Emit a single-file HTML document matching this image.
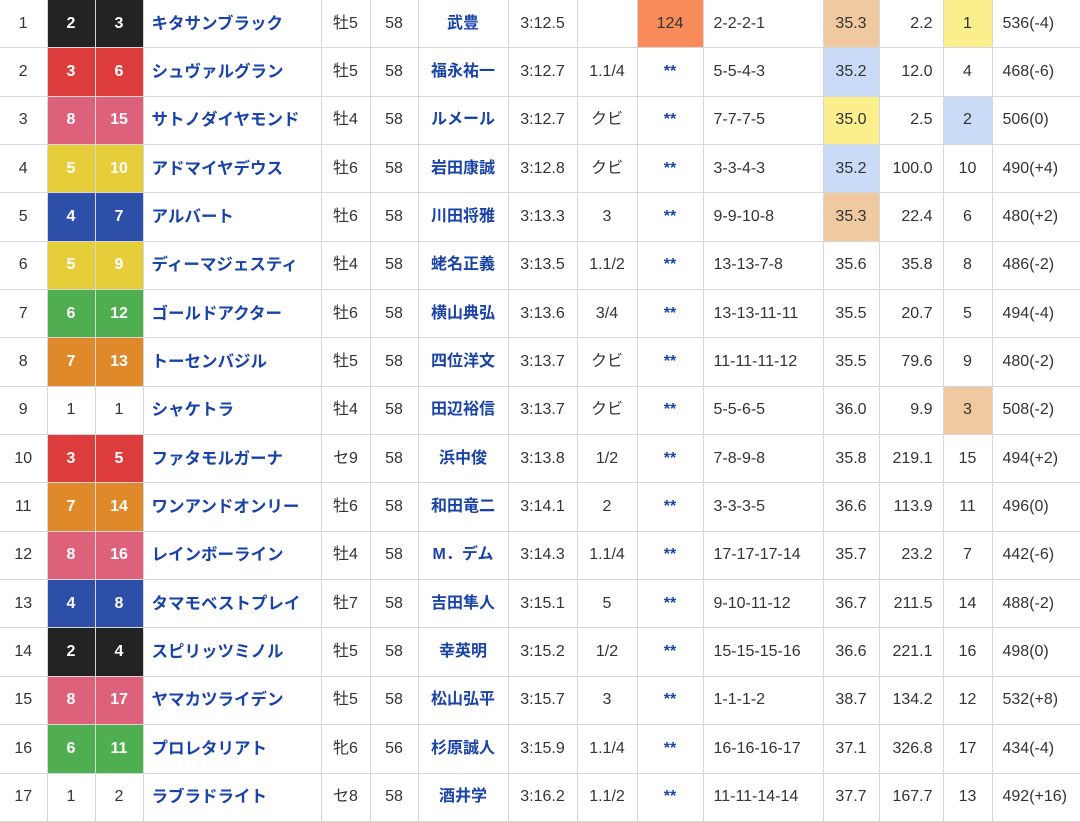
<!DOCTYPE html>
<html><head><meta charset="utf-8"><style>
html,body{margin:0;padding:0;background:#fff;width:1080px;height:822px;overflow:hidden}
table{border-collapse:collapse;table-layout:fixed;width:1082px;font-family:"Liberation Sans","Noto Sans CJK JP",sans-serif;font-size:16px;color:#333}
td{border:1.5px solid #d6d6d6;height:47.35px;padding:0;text-align:center;white-space:nowrap;overflow:hidden;vertical-align:middle;line-height:20px}
tr:first-child td{border-top:none}
td:first-child{border-left:none}
.n{text-align:left;padding-left:8px;color:#1a43a8;font-weight:bold;font-size:16.5px}
.j{color:#1a43a8;font-weight:bold}
.l{text-align:left;padding-left:10px}
.r{text-align:right;padding-right:10px}
.s{color:#1a43a8;font-weight:bold}
.w{font-weight:bold;color:#fff}
.w1{background:#fff;color:#333;font-weight:normal}.w2{background:#222}.w3{background:#dc3c3c}.w4{background:#2d4fa8}.w5{background:#e6cd3a}.w6{background:#4fae4f}.w7{background:#e0892a}.w8{background:#dd617b}
.o{background:#f98a5a}.t{background:#efc9a0}.b{background:#c9dbf7}.y{background:#fbee8c}
</style></head><body>
<table>
<colgroup><col style="width:47px"><col style="width:48px"><col style="width:48px"><col style="width:178px"><col style="width:49px"><col style="width:48px"><col style="width:90px"><col style="width:69px"><col style="width:60px"><col style="width:66px"><col style="width:120px"><col style="width:56px"><col style="width:64px"><col style="width:49px"><col style="width:90px"></colgroup>
<tr><td>1</td><td class="w w2">2</td><td class="w w2">3</td><td class="n">キタサンブラック</td><td>牡5</td><td>58</td><td class="j">武豊</td><td>3:12.5</td><td></td><td class="o">124</td><td class="l">2-2-2-1</td><td class="t">35.3</td><td class="r">2.2</td><td class="y">1</td><td class="l">536(-4)</td></tr>
<tr><td>2</td><td class="w w3">3</td><td class="w w3">6</td><td class="n">シュヴァルグラン</td><td>牡5</td><td>58</td><td class="j">福永祐一</td><td>3:12.7</td><td>1.1/4</td><td class="s">**</td><td class="l">5-5-4-3</td><td class="b">35.2</td><td class="r">12.0</td><td>4</td><td class="l">468(-6)</td></tr>
<tr><td>3</td><td class="w w8">8</td><td class="w w8">15</td><td class="n">サトノダイヤモンド</td><td>牡4</td><td>58</td><td class="j">ルメール</td><td>3:12.7</td><td>クビ</td><td class="s">**</td><td class="l">7-7-7-5</td><td class="y">35.0</td><td class="r">2.5</td><td class="b">2</td><td class="l">506(0)</td></tr>
<tr><td>4</td><td class="w w5">5</td><td class="w w5">10</td><td class="n">アドマイヤデウス</td><td>牡6</td><td>58</td><td class="j">岩田康誠</td><td>3:12.8</td><td>クビ</td><td class="s">**</td><td class="l">3-3-4-3</td><td class="b">35.2</td><td class="r">100.0</td><td>10</td><td class="l">490(+4)</td></tr>
<tr><td>5</td><td class="w w4">4</td><td class="w w4">7</td><td class="n">アルバート</td><td>牡6</td><td>58</td><td class="j">川田将雅</td><td>3:13.3</td><td>3</td><td class="s">**</td><td class="l">9-9-10-8</td><td class="t">35.3</td><td class="r">22.4</td><td>6</td><td class="l">480(+2)</td></tr>
<tr><td>6</td><td class="w w5">5</td><td class="w w5">9</td><td class="n">ディーマジェスティ</td><td>牡4</td><td>58</td><td class="j">蛯名正義</td><td>3:13.5</td><td>1.1/2</td><td class="s">**</td><td class="l">13-13-7-8</td><td>35.6</td><td class="r">35.8</td><td>8</td><td class="l">486(-2)</td></tr>
<tr><td>7</td><td class="w w6">6</td><td class="w w6">12</td><td class="n">ゴールドアクター</td><td>牡6</td><td>58</td><td class="j">横山典弘</td><td>3:13.6</td><td>3/4</td><td class="s">**</td><td class="l">13-13-11-11</td><td>35.5</td><td class="r">20.7</td><td>5</td><td class="l">494(-4)</td></tr>
<tr><td>8</td><td class="w w7">7</td><td class="w w7">13</td><td class="n">トーセンバジル</td><td>牡5</td><td>58</td><td class="j">四位洋文</td><td>3:13.7</td><td>クビ</td><td class="s">**</td><td class="l">11-11-11-12</td><td>35.5</td><td class="r">79.6</td><td>9</td><td class="l">480(-2)</td></tr>
<tr><td>9</td><td class="w w1">1</td><td class="w w1">1</td><td class="n">シャケトラ</td><td>牡4</td><td>58</td><td class="j">田辺裕信</td><td>3:13.7</td><td>クビ</td><td class="s">**</td><td class="l">5-5-6-5</td><td>36.0</td><td class="r">9.9</td><td class="t">3</td><td class="l">508(-2)</td></tr>
<tr><td>10</td><td class="w w3">3</td><td class="w w3">5</td><td class="n">ファタモルガーナ</td><td>セ9</td><td>58</td><td class="j">浜中俊</td><td>3:13.8</td><td>1/2</td><td class="s">**</td><td class="l">7-8-9-8</td><td>35.8</td><td class="r">219.1</td><td>15</td><td class="l">494(+2)</td></tr>
<tr><td>11</td><td class="w w7">7</td><td class="w w7">14</td><td class="n">ワンアンドオンリー</td><td>牡6</td><td>58</td><td class="j">和田竜二</td><td>3:14.1</td><td>2</td><td class="s">**</td><td class="l">3-3-3-5</td><td>36.6</td><td class="r">113.9</td><td>11</td><td class="l">496(0)</td></tr>
<tr><td>12</td><td class="w w8">8</td><td class="w w8">16</td><td class="n">レインボーライン</td><td>牡4</td><td>58</td><td class="j">M．デム</td><td>3:14.3</td><td>1.1/4</td><td class="s">**</td><td class="l">17-17-17-14</td><td>35.7</td><td class="r">23.2</td><td>7</td><td class="l">442(-6)</td></tr>
<tr><td>13</td><td class="w w4">4</td><td class="w w4">8</td><td class="n">タマモベストプレイ</td><td>牡7</td><td>58</td><td class="j">吉田隼人</td><td>3:15.1</td><td>5</td><td class="s">**</td><td class="l">9-10-11-12</td><td>36.7</td><td class="r">211.5</td><td>14</td><td class="l">488(-2)</td></tr>
<tr><td>14</td><td class="w w2">2</td><td class="w w2">4</td><td class="n">スピリッツミノル</td><td>牡5</td><td>58</td><td class="j">幸英明</td><td>3:15.2</td><td>1/2</td><td class="s">**</td><td class="l">15-15-15-16</td><td>36.6</td><td class="r">221.1</td><td>16</td><td class="l">498(0)</td></tr>
<tr><td>15</td><td class="w w8">8</td><td class="w w8">17</td><td class="n">ヤマカツライデン</td><td>牡5</td><td>58</td><td class="j">松山弘平</td><td>3:15.7</td><td>3</td><td class="s">**</td><td class="l">1-1-1-2</td><td>38.7</td><td class="r">134.2</td><td>12</td><td class="l">532(+8)</td></tr>
<tr><td>16</td><td class="w w6">6</td><td class="w w6">11</td><td class="n">プロレタリアト</td><td>牝6</td><td>56</td><td class="j">杉原誠人</td><td>3:15.9</td><td>1.1/4</td><td class="s">**</td><td class="l">16-16-16-17</td><td>37.1</td><td class="r">326.8</td><td>17</td><td class="l">434(-4)</td></tr>
<tr><td>17</td><td class="w w1">1</td><td class="w w1">2</td><td class="n">ラブラドライト</td><td>セ8</td><td>58</td><td class="j">酒井学</td><td>3:16.2</td><td>1.1/2</td><td class="s">**</td><td class="l">11-11-14-14</td><td>37.7</td><td class="r">167.7</td><td>13</td><td class="l">492(+16)</td></tr>
</table>
</body></html>
